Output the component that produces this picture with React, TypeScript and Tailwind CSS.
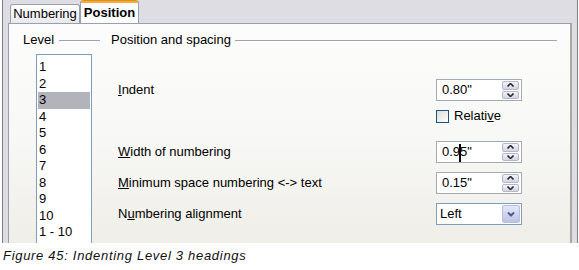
export default function App() {
  const levels = ["1", "2", "3", "4", "5", "6", "7", "8", "9", "10", "1 - 10"];

  return (
    <div className="w-[579px] h-[270px] bg-white overflow-hidden font-['Liberation_Sans',Arial,sans-serif] text-[13px] text-black">
      {/* Dialog area */}
      <div className="ml-[2px] w-[576px] h-[243px] bg-[#dedde3] border-l border-r border-[#7c7b86] flex flex-col">
        {/* Tabs */}
        <div className="h-[23px] pl-[7px] flex items-end shrink-0">
          <div className="h-[19px] w-[70px] border border-b-0 border-[#98a0b0] rounded-t-[3px] bg-gradient-to-b from-[#ffffff] to-[#e8e8ee] flex items-center justify-center">
            Numbering
          </div>
          <div className="h-[23px] w-[59px] border-x border-[#98a0b0] rounded-t-[3px] bg-[#fcfcfc] flex flex-col">
            <div className="h-[3px] rounded-t-[3px] bg-[#f2ae3d] border-t border-[#e08c1e]" />
            <div className="flex-1 flex items-center justify-center font-bold pb-[1px]">Position</div>
          </div>
        </div>

        {/* Panel */}
        <div className="ml-[5px] w-[564px] flex-1 flex border-t border-l border-[#98a0b0] border-r-[2px] border-r-[#aaa99f] bg-gradient-to-b from-[#fcfcfc] via-[#f8f8f6] to-[#efeee8]">
          {/* Level column */}
          <div className="w-[91px] shrink-0 flex flex-col pt-[8px]">
            <div className="h-[16px] flex items-center pl-[14px]">
              <span>Level</span>
              <div className="ml-[5px] flex-1 h-px bg-[#a3a3ab]" />
            </div>
            <div className="ml-[27px] mt-[6px] w-[56px] flex-1 border border-b-0 border-[#7f9db9] bg-white px-px pt-[4px]">
              {levels.map((l) => (
                <div
                  key={l}
                  className={`h-[16.5px] leading-[16.5px] pl-[1px] ${l === "3" ? "bg-[#b3b3bb]" : ""}`}
                >
                  {l}
                </div>
              ))}
            </div>
          </div>

          {/* Position and spacing */}
          <div className="flex-1 flex flex-col pt-[8px] pr-[13px]">
            <div className="h-[16px] flex items-center pl-[11px]">
              <span>Position and spacing</span>
              <div className="ml-[4px] flex-1 h-px bg-[#a3a3ab]" />
            </div>

            <div className="mt-[31px] h-[22px] flex items-center">
              <span className="pl-[18px] w-[336px]"><u>I</u>ndent</span>
              <SpinBox value={<>0.80"</>} />
            </div>

            <div className="mt-[8px] h-[14px] flex items-center pl-[336px]">
              <div className="w-[13px] h-[13px] border border-[#1c5180] bg-gradient-to-br from-[#dcdcd6] to-[#ffffff]" />
              <span className="ml-[5px]">Relati<u>v</u>e</span>
            </div>

            <div className="mt-[18px] flex flex-col gap-[9px]">
              <div className="h-[22px] flex items-center">
                <span className="pl-[18px] w-[336px]"><u>W</u>idth of numbering</span>
                <SpinBox
                  value={
                    <>
                      0.9<span className="inline-block w-[2px] h-[18px] bg-black align-middle -mx-px" />5"
                    </>
                  }
                />
              </div>
              <div className="h-[22px] flex items-center">
                <span className="pl-[18px] w-[336px]"><u>M</u>inimum space numbering &lt;-&gt; text</span>
                <SpinBox value={<>0.15"</>} />
              </div>
              <div className="h-[22px] flex items-center">
                <span className="pl-[18px] w-[336px]">N<u>u</u>mbering alignment</span>
                <div className="w-[86px] h-[22px] border border-[#7f9db9] bg-white flex items-center pl-[3px] pr-[1px]">
                  <span className="flex-1">Left</span>
                  <div className="w-[18px] h-[18px] rounded-[2px] border border-[#b9c0dd] bg-gradient-to-b from-[#e4e8fb] to-[#bcc2e4] flex items-center justify-center">
                    <svg width="8" height="6" viewBox="0 0 8 6">
                      <path d="M1 1.5 L4 4.5 L7 1.5" fill="none" stroke="#4d6185" strokeWidth="2" />
                    </svg>
                  </div>
                </div>
              </div>
            </div>
          </div>
        </div>
      </div>

      {/* Caption */}
      <div className="pl-[3px] pt-[3px] italic tracking-[0.7px] text-[13px] text-[#111]">
        Figure 45: Indenting Level 3 headings
      </div>
    </div>
  );
}

function SpinBox({ value }: { value: React.ReactNode }) {
  return (
    <div className="w-[86px] h-[22px] border border-[#a4abb5] bg-white flex items-center pl-[5px] pr-[2px]">
      <span className="flex-1 whitespace-nowrap">{value}</span>
      <div className="w-[17px] h-[18px] flex flex-col gap-px">
        <div className="flex-1 rounded-[2px] border border-[#b4b7c8] bg-gradient-to-b from-[#f4f4f8] to-[#d4d5e2] flex items-center justify-center">
          <svg width="7" height="4" viewBox="0 0 7 4">
            <path d="M0.5 3.5 L3.5 0.5 L6.5 3.5" fill="none" stroke="#2e2e3a" strokeWidth="1.6" />
          </svg>
        </div>
        <div className="flex-1 rounded-[2px] border border-[#b4b7c8] bg-gradient-to-b from-[#f4f4f8] to-[#d4d5e2] flex items-center justify-center">
          <svg width="7" height="4" viewBox="0 0 7 4">
            <path d="M0.5 0.5 L3.5 3.5 L6.5 0.5" fill="none" stroke="#2e2e3a" strokeWidth="1.6" />
          </svg>
        </div>
      </div>
    </div>
  );
}
